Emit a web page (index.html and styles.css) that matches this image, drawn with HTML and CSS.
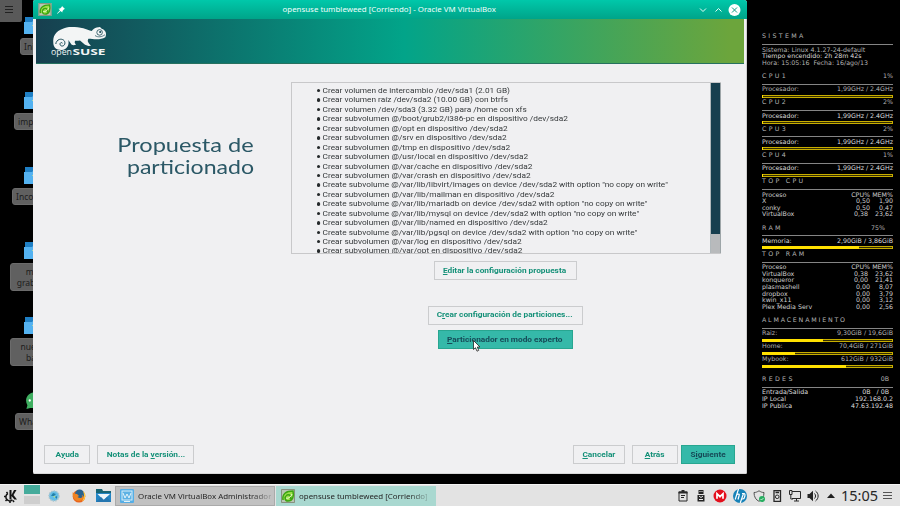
FILE: index.html
```html
<!DOCTYPE html>
<html lang="es">
<head>
<meta charset="utf-8">
<title>opensuse tumbleweed</title>
<link rel="stylesheet" href="styles.css">
</head>
<body>
<svg width="0" height="0" class="defs">
  <defs>
    <symbol id="folder" viewBox="0 0 20 17"><path d="M1 0h19v8H1z" fill="#1f7fc4"/><path d="M0 5h8l1-1h11v13H0z" fill="#54b2f0"/><path d="M8 8h1v1H8z" fill="#a5d6b0"/></symbol>
    <symbol id="suse" viewBox="0 0 14 14"><path d="M0 0h14v14H0z" fill="#b9c6b4"/><path d="M.5.5h13v13H.5z" fill="none" stroke="#87917f"/><path d="M2 11C1 5 5 2 12 2c1 5 0 10-5 10-3 0-4-4-1-6 3-1 5 2 3 4" fill="#9be04a" stroke="#3ca512" stroke-width="1.5"/><path d="M5 9c2 1 5-1 6-4" fill="none" stroke="#effbd8"/></symbol>
  </defs>
</svg>
<main class="desktop">
  <div class="corner"><i></i><i></i><i></i></div>
  <div class="shortcut s1"><svg><use href="#folder"/></svg><span>Inicio</span></div>
  <div class="shortcut s2"><svg><use href="#folder"/></svg><span>impre</span></div>
  <div class="shortcut s3"><svg><use href="#folder"/></svg><span>Incom</span></div>
  <div class="shortcut s4"><svg><use href="#folder"/></svg><span>mis<br>graba</span></div>
  <div class="shortcut s5"><svg><use href="#folder"/></svg><span>nuev<br>bac</span></div>
  <div class="shortcut s6"><svg viewBox="0 0 20 18"><path d="M2 18l1-4C-1 7 4 0 12 0h8v17H6z" fill="#3fae60"/><circle cx="5.5" cy="9" r="1.2" fill="#fff"/></svg><span>What</span></div>

  <section class="window">
    <header class="titlebar">
      <svg class="appicon"><use href="#suse"/></svg>
      <svg class="pin" viewBox="0 0 8 8"><path d="M5 0l3 3-1 .3-1.500 1.600-.2 1.600L3.600 5 .5 7.800 0 7.500 3 4.300 1.500 2.800l1.600-.3L4.700 1z" fill="#fff"/></svg>
      <h1>opensuse tumbleweed [Corriendo] - Oracle VM VirtualBox</h1>
      <svg class="winbtns" viewBox="0 0 42 12"><path d="M1 4.500l3 3 3-3M16.500 7.500l3-3 3 3" fill="none" stroke="#e5fff8"/><circle cx="35.500" cy="6" r="6" fill="#fff"/><path d="M33 3.500l5 5m0-5l-5 5" stroke="#109b82"/></svg>
    </header>
    <div class="screen">
      <div class="banner">
        <svg viewBox="0 0 58 32">
          <path d="M2.300 17.300C2 13 2.500 11 4 8.500 6 5.500 8.500 4 10.700 3.300 14 1.500 17 1 20.700 1c4 0 8 .2 11.600 1.300 3 1 6 2.200 8.400 2.700 1.500-1.700 3-3 5-3.500l3.300-.4 1.700 1.600c2 .5 3.600 2 4 3.600.5 1.700.4 3.500-.4 5-2.500 1.500-5.600 2-8.600 2-3 0-6-.4-8.400-.6l-.6 2.300c.8 2 2 3.700 3.300 4.700l-2.500.3-3.500-1.300-5-4.300c-2 .5-3.500.6-5 .3l-.3 2 1.300 2-2.500.5-1.800-.5-3.400-4.700c1.200 5-1.300 9.800-6.600 10C5.500 24.200 2.600 21.500 2.300 17.300z" fill="#f3f5f5"/>
          <path d="M11.500 17.200c-.9-1.300-3-.3-2.400 1.500.8 2 4 1.800 4.700-.8.700-3.500-2.500-5.300-5.300-4.500-2.200.7-3.500 2.500-3.700 4.600" fill="none" stroke="#194a56" stroke-width="1"/>
          <circle cx="48.600" cy="6.400" r="2.800" fill="#f3f5f5" stroke="#194a56" stroke-width=".8"/><circle cx="49.200" cy="6" r="1.100" fill="#194a56"/><path d="M44 9.500c3 2.200 7 1.500 10-.8" fill="none" stroke="#194a56" stroke-width=".7"/>
          <text x="0" y="28.600" class="logo-open" textLength="21" lengthAdjust="spacingAndGlyphs">open</text>
          <text x="21.500" y="28.600" class="logo-suse" textLength="33" lengthAdjust="spacingAndGlyphs">SUSE</text>
        </svg>
      </div>
      <div class="content">
        <h2><span>Propuesta de</span><br><span class="h2b">particionado</span></h2>
        <div class="proposal">
          <div class="viewport">
            <ul>
              <li>Crear volumen de intercambio /dev/sda1 (2.01 GB)</li>
              <li>Crear volumen raíz /dev/sda2 (10.00 GB) con btrfs</li>
              <li>Crear volumen /dev/sda3 (3.32 GB) para /home con xfs</li>
              <li>Crear subvolumen @/boot/grub2/i386-pc en dispositivo /dev/sda2</li>
              <li>Crear subvolumen @/opt en dispositivo /dev/sda2</li>
              <li>Crear subvolumen @/srv en dispositivo /dev/sda2</li>
              <li>Crear subvolumen @/tmp en dispositivo /dev/sda2</li>
              <li>Crear subvolumen @/usr/local en dispositivo /dev/sda2</li>
              <li>Crear subvolumen @/var/cache en dispositivo /dev/sda2</li>
              <li>Crear subvolumen @/var/crash en dispositivo /dev/sda2</li>
              <li>Create subvolume @/var/lib/libvirt/images on device /dev/sda2 with option "no copy on write"</li>
              <li>Crear subvolumen @/var/lib/mailman en dispositivo /dev/sda2</li>
              <li>Create subvolume @/var/lib/mariadb on device /dev/sda2 with option "no copy on write"</li>
              <li>Create subvolume @/var/lib/mysql on device /dev/sda2 with option "no copy on write"</li>
              <li>Crear subvolumen @/var/lib/named en dispositivo /dev/sda2</li>
              <li>Create subvolume @/var/lib/pgsql on device /dev/sda2 with option "no copy on write"</li>
              <li>Crear subvolumen @/var/log en dispositivo /dev/sda2</li>
              <li>Crear subvolumen @/var/opt en dispositivo /dev/sda2</li>
            </ul>
            <div class="scrollbar"><div class="thumb"></div></div>
          </div>
          <div class="actions">
            <button class="edit"><span><u>E</u>ditar la configuración propuesta</span></button>
            <button class="create"><span>C<u>r</u>ear configuración de particiones...</span></button>
            <button class="expert primary"><span><u>P</u>articionador en modo experto</span></button>
          </div>
        </div>
      </div>
      <footer>
        <button class="b-help"><span>A<u>y</u>uda</span></button>
        <button class="b-notes"><span>Notas de la <u>v</u>ersión...</span></button>
        <button class="b-cancel"><span><u>C</u>ancelar</span></button>
        <button class="b-back"><span><u>A</u>trás</span></button>
        <button class="b-next primary"><span>S<u>i</u>guiente</span></button>
      </footer>
    </div>
  </section>
  <svg class="cursor" viewBox="0 0 8 12"><path d="M.5.5v9l2-1.800 1.500 3.500 1.700-.8L4.300 7H7z" fill="#fff" stroke="#222" stroke-width=".8"/></svg>

  <aside class="conky">
    <div class="head"><b>SISTEMA</b></div><hr>
    <div><span>Sistema: Linux 4.1.27-24-default</span></div>
    <div><span class="bright">Tiempo encendido: 2h 28m 42s</span></div>
    <div><span>Hora: 15:05:16&nbsp; Fecha: 16/ago/13</span></div>
    <div></div>
    <div class="head"><b>CPU1</b><span>1%</span></div><hr>
    <div><span>Procesador:</span><span>1,99GHz / 2.4GHz</span></div><div class="bar"><i style="width:1%"></i></div>
    <div class="head"><b>CPU2</b><span>2%</span></div><hr>
    <div class="bright"><span>Procesador:</span><span>1,99GHz / 2.4GHz</span></div><div class="bar"><i style="width:1%"></i></div>
    <div class="head"><b>CPU3</b><span>2%</span></div><hr>
    <div class="bright"><span>Procesador:</span><span>1,99GHz / 2.4GHz</span></div><div class="bar"><i style="width:1%"></i></div>
    <div class="head"><b>CPU4</b><span>1%</span></div><hr>
    <div class="bright"><span>Procesador:</span><span>1,99GHz / 2.4GHz</span></div><div class="bar"><i style="width:1%"></i></div>
    <div class="head"><b>TOP CPU</b></div><hr>
    <div class="proc"><span>Proceso</span><span>CPU%</span><span>MEM%</span></div>
    <div class="proc"><span>X</span><span>0,50</span><span>1,90</span></div>
    <div class="proc"><span>conky</span><span>0,50</span><span>0,47</span></div>
    <div class="proc"><span>VirtualBox</span><span>0,38&nbsp;</span><span>23,62</span></div>
    <div></div>
    <div class="head"><b>RAM</b><span class="in8">75%</span></div><hr>
    <div class="bright"><span>Memoria:</span><span>2,90GiB / 3,86GiB</span></div><div class="bar"><i style="width:75%"></i></div>
    <div class="head"><b>TOP RAM</b></div><hr>
    <div class="proc"><span>Proceso</span><span>CPU%</span><span>MEM%</span></div>
    <div class="proc"><span>VirtualBox</span><span>0,38&nbsp;</span><span>23,62</span></div>
    <div class="proc"><span>konqueror</span><span>0,00&nbsp;</span><span>21,41</span></div>
    <div class="proc"><span>plasmashell</span><span>0,00</span><span>8,07</span></div>
    <div class="proc"><span>dropbox</span><span>0,00</span><span>3,79</span></div>
    <div class="proc"><span>kwin_x11</span><span>0,00</span><span>3,12</span></div>
    <div class="proc"><span>Plex Media Serv</span><span>0,00</span><span>2,56</span></div>
    <div></div>
    <div class="head tight"><b>ALMACENAMIENTO</b></div><hr>
    <div><span>Raiz:</span><span>9,30GiB / 19,6GiB</span></div><div class="bar"><i style="width:47%"></i></div>
    <div><span>Home:</span><span>70,4GiB / 271GiB</span></div><div class="bar"><i style="width:25.500%"></i></div>
    <div><span>Mybook:</span><span>612GiB / 932GiB</span></div><div class="bar"><i style="width:65%"></i></div>
    <div></div>
    <div class="head"><b>REDES</b><span class="in4">0B</span></div><hr>
    <div class="bright"><span>Entrada/Salida</span><span class="in4">0B&nbsp;&nbsp; / 0B</span></div>
    <div class="bright"><span>IP Local</span><span>192.168.0.2</span></div>
    <div class="bright"><span>IP Publica</span><span>47.63.192.48</span></div>
  </aside>

  <nav class="panel">
    <svg class="kde" viewBox="0 0 14 14"><path d="M5.500 1h2v5L10 1h2.500L9.500 6l3.500 4.500h-2.600L7.500 7v3.500h-2z" fill="#151515"/><path d="M4 4.500c-2.500 1-3 5-.5 6.500 1.500 1.400 4 1 5-.2" fill="none" stroke="#151515" stroke-width="1.500"/><path d="M2.500 3l1.200 1.500M0 7.500h2M1.500 12l1.500-1.500M6 12v2M10 13l-1-1.500" stroke="#151515" stroke-width="1.500"/></svg>
    <div class="pager"><i></i><i></i></div>
    <svg class="globe" viewBox="0 0 12 12"><circle cx="6" cy="6" r="5" fill="#64bde6" stroke="#abc5cd" stroke-width="1.500" stroke-dasharray="1.500 1"/><path d="M3 6l2-3 3 1-2 2zm4 1l2-1v3z" fill="#2380a8"/><path d="M5 6h2v2z" fill="#b8e27c"/></svg>
    <svg class="fox" viewBox="0 0 14 14"><circle cx="7" cy="7.300" r="6.300" fill="#e9641c"/><circle cx="7.600" cy="5.300" r="4.700" fill="#28638f"/><path d="M.8 3C2 5 3 4.500 5 5L7 7 5.500 8c2 2 5 1 5-1L9.500 6C13 6 12 12 7 12 2 12 0 7 .8 3z" fill="#f08422"/><path d="M11 2c3 2 3 7 .5 9.500L10 12c3-4 2-7 1-10z" fill="#ffc83d"/></svg>
    <svg class="mail" viewBox="0 0 15 13"><path d="M0 0h6l1 2h8v11H0z" fill="#176575"/><path d="M0 4h15v9H0z" fill="#2385c4"/><path d="M1.500 5H14L7.500 11z" fill="#edf6fa"/><path d="M1 12l4-4 3 3 3-3 4 5H0z" fill="#2576b0"/></svg>
    <div class="task t1"><svg viewBox="0 0 14 14"><rect width="14" height="14" rx="1" fill="#55aee6"/><rect x="2" y="2" width="10" height="9" fill="#5eb2e4" stroke="#d8edf8"/><path d="M3 4l2 5 2-4 2 4 2-5M4 12.500h6" fill="none" stroke="#e4f3fa"/></svg><span>Oracle VM VirtualBox Administrador</span></div>
    <div class="task t2"><svg><use href="#suse"/></svg><span>opensuse tumbleweed [Corriendo]</span></div>
    <div class="tray">
      <svg viewBox="0 0 12 12"><path d="M2 2h8v9H2zM4 5.500h4M4 7.500h3" fill="none" stroke="#282828"/><path d="M1.500 1.500h9v2h-9zM4.500 0h3v2h-3z" fill="#282828"/></svg>
      <svg viewBox="0 0 12 12"><path d="M3.500 0h5v4h-5zM2.500 5h7v6.500h-7z" fill="#242424"/><path d="M4.500 1.500h1m1 0h1M4 9.500h4M4 6l2 1.500L8 6" stroke="#eee" fill="none"/></svg>
      <svg class="big" viewBox="0 0 14 14"><circle cx="7" cy="7" r="6.500" fill="#e30f1c"/><path d="M4 9.800V4.700l3 3 3-3v5.100" fill="none" stroke="#fff" stroke-width="1.700"/></svg>
      <svg class="big" viewBox="0 0 14 14"><circle cx="7" cy="7" r="7" fill="#1682b8"/><path d="M5.500 0L2.200 10.500M3.800 5.500c3-1 2.600 0 2.200 1.500l-1 3.500M10.500 4.500L7.200 14M9 4.500h2c2 0 .5 5.500-1 5.500H8.500" fill="none" stroke="#fff" stroke-width="1.200"/></svg>
      <svg viewBox="0 0 12 12"><path d="M1 2.500C3 2.500 4 2 6 .8c2 1.200 3 1.700 5 1.700C11 7 9 10 6 11.300 3 10 1 7 1 2.500z" fill="none" stroke="#555"/><circle cx="9" cy="9" r="3" fill="#27ae60"/><path d="M7.500 9l1 1L10.500 8" stroke="#fff" fill="none" stroke-width=".7"/></svg>
      <svg viewBox="0 0 12 12"><path d="M3 .5h6.500v11H3zM4.500 2.500h3.500" fill="none" stroke="#282828" stroke-width="1.300"/><circle cx="6.200" cy="6.800" r="1.800" fill="none" stroke="#282828"/></svg>
      <svg viewBox="0 0 12 12"><path d="M3 1.500h8.500v7H3M5 11h5M7.500 8.500V11M.5.500H3v4H.5zM1.800 4.500V9H4" fill="none" stroke="#282828"/></svg>
      <svg viewBox="0 0 12 12"><path d="M.5 4h2L6 .8v10.400L2.500 8h-2z" fill="#242424"/><path d="M7.500 3.500c1.400 1.500 1.400 3.500 0 5M8.500 1c3.500 2.500 3.500 7.500 0 10" fill="none" stroke="#242424"/></svg>
      <svg viewBox="0 0 12 12"><path d="M2 8l4-4.500L10 8z" fill="#202020"/></svg>
    </div>
    <time>15:05</time>
    <div class="lines"><i></i><i></i><i></i></div>
  </nav>
</main>
</body>
</html>
```

FILE: styles.css
```css
* { box-sizing: border-box; }
body { margin: 0; background: #000; }
h1, h2, ul { margin: 0; padding: 0; font-weight: normal; }
.defs { position: absolute; }
.desktop { position: relative; width: 900px; height: 506px; overflow: hidden; background: #000; }

.corner { position: absolute; left: 0; top: 0; width: 22px; height: 22px; background: #595959; border-radius: 0 0 2px 0; padding: 6px 9px 0 5px; }
.corner i { display: block; height: 1px; background: #222; margin-bottom: 2px; }
.shortcut { position: absolute; display: flex; flex-direction: column; align-items: flex-end; width: 60px; left: 0; font: 8.500px/11px "Noto Sans", sans-serif; color: #1c1c1c; }
.shortcut svg { width: 20px; height: 17px; margin-right: 16px; flex: none; }
.shortcut span { width: 46px; margin-top: 4px; padding: 2px 3px; background: #606060; border: 1px solid #6b6b6b; border-radius: 3px; min-height: 17px; white-space: nowrap; }
.s1 { top: 17px; } .s2 { top: 92px; } .s3 { top: 167px; } .s4 { top: 242px; } .s5 { top: 317px; } .s6 { top: 392px; }
.s1 span { width: 40px; }
.s3 span { width: 48px; }
.s4 span, .s5 span { width: 50px; height: 28px; padding-right: 19px; text-align: right; }
.s6 span { width: 45px; padding-left: 3px; }

.window { position: absolute; left: 33px; top: 0; width: 713.500px; height: 474px; background: #f0f0f2; border-radius: 2px 3px 2px 2px; overflow: hidden; }
.titlebar { height: 19px; display: flex; align-items: center; background: linear-gradient(#00c8aa, #00a489); padding: 0 6px 0 5px; color: #f2fffc; }
.appicon { width: 14px; height: 13px; flex: none; }
.pin { width: 8px; height: 8px; margin-left: 5px; }
.titlebar h1 { flex: 1; margin-left: 217.500px; font: 7.900px/19px "Noto Sans", sans-serif; white-space: nowrap; }
.winbtns { width: 42px; height: 12px; flex: none; }
.screen { height: 455px; padding: 0 2px 0 3px; display: flex; flex-direction: column; border-right: 1px solid #cfcfcf; border-bottom: 1px solid #d8d8d8; }
.banner { height: 45px; background: linear-gradient(90deg, #173f4f 0, #02a489 52%, #6ca53c 98%); border-bottom: 1px solid #26715f; }
.banner svg { display: block; width: 58px; height: 32px; margin: 7px 0 0 15px; }
.logo-open, .logo-suse { font-family: "Open Sans", sans-serif; font-size: 9.200px; fill: #f1f5f5; }
.logo-suse { font-weight: bold; }
.content { flex: 1; display: flex; padding-top: 18px; }
h2 { width: 218px; margin-right: 37px; padding-top: 51px; font: 20px/22.300px Lato, sans-serif; color: #2b5866; text-align: right; }
h2 span { display: inline-block; transform: scaleX(1.180); transform-origin: right; }
h2 .h2b { transform: scaleX(1.155); }
.proposal { width: 430px; }
.viewport { height: 172px; border: 1px solid #c8c8ca; border-right: 0; display: flex; overflow: hidden; }
ul { flex: 1; list-style: none; padding: 3px 0 0 25px; font: 8px/9.430px Roboto, sans-serif; color: #34383a; }
li { display: flex; align-items: center; white-space: nowrap; width: 350px; transform: scaleX(1.036); transform-origin: left; }
li::before { content: ""; flex: none; width: 3.400px; height: 3.400px; border-radius: 50%; background: #25292b; margin-right: 2px; }
.scrollbar { width: 11px; background: #b8babc; border-left: 1px solid #b0b8bb; border-right: 1px solid #9da5a8; }
.thumb { height: 150.500px; background: #173f4f; }
.actions { display: flex; flex-direction: column; align-items: center; padding: 7px 2px 0 0; }
button { flex: none; height: 19px; padding: 0; border: 1px solid #cbccce; background: #f0f0f2; color: #149078; font: bold 8px/16px Roboto, sans-serif; white-space: nowrap; }
button span { display: inline-block; transform: scaleX(1.035); }
u { text-underline-offset: 1px; text-decoration-thickness: .7px; }
.primary { background: #35b9a9; border-color: #28a690; color: #164a57; }
.edit { width: 143px; }
.create { width: 155px; margin-top: 25.500px; }
.expert { width: 135px; margin-top: 5.500px; }
footer { display: flex; height: 28px; padding-left: 8px; }
footer button { margin-top: 0; }
.b-help { width: 46px; }
.b-notes { width: 97px; margin-left: 7px; }
.b-cancel { width: 52px; margin-left: 379px; }
.b-back { width: 46px; margin-left: 7px; }
.b-next { width: 54px; margin-left: 3px; }
.cursor { position: absolute; left: 473px; top: 340px; width: 8px; height: 12px; }

.conky { position: absolute; left: 762px; top: 33.400px; width: 131px; font: 6.300px/6.600px "DejaVu Sans", sans-serif; color: #b4b4b4; }
.conky > div { display: flex; justify-content: space-between; height: 6.600px; white-space: nowrap; }
.conky .bright { color: #dedede; }
.conky hr { height: 6.600px; margin: 0; border: 0; background: linear-gradient(#858585, #858585) 0 4px / 100% 1px no-repeat; }
.conky b { font-weight: normal; letter-spacing: 2.300px; }
.conky .tight b { letter-spacing: 1.800px; }
.conky > .bar { height: 3px; margin: 2px 0 1.600px; border: 1px solid #c7ad00; background: #332c00; }
.bar i { background: #ffe000; margin: -1px 0 -1px -1px; }
.conky > .proc { display: grid; grid-template-columns: 1fr 40px 23px; color: #cfcfcf; }
.proc span + span { text-align: right; }
.in8 { margin-right: 8px; }
.in4 { margin-right: 4px; }

.panel { position: absolute; left: 0; right: 0; bottom: 0; height: 22px; display: flex; align-items: center; background: #e3e3e3; border-top: 1px solid #f4f4f4; color: #262626; font-family: "Noto Sans", sans-serif; }
.panel svg, .panel > * { flex: none; }
.kde { width: 14px; height: 14px; margin-left: 4px; }
.pager { width: 16px; margin-left: 6px; align-self: stretch; }
.pager i { display: block; height: 9px; background: #45ab9b; margin-bottom: 2px; }
.pager i + i { background: #cecece; height: 8px; }
.globe { width: 12px; height: 12px; margin-left: 8px; }
.fox { width: 14px; height: 14px; margin-left: 12px; }
.mail { width: 15px; height: 13px; margin-left: 10px; }
.task { height: 20px; display: flex; align-items: center; gap: 4px; padding-left: 5px; font-size: 8.150px; white-space: nowrap; }
.task svg { width: 14px; height: 14px; }
.task span { -webkit-mask-image: linear-gradient(90deg, #000 85%, #0003); mask-image: linear-gradient(90deg, #000 85%, #0003); }
.t1 { width: 160px; margin-left: 4px; background: #c1c1c1; border: 1px solid #aaa; font-size: 7.900px; padding-left: 4px; }
.t2 { width: 160px; margin-left: 1px; background: #a9d8d0; font-size: 7.900px; }
.tray { display: flex; align-items: center; margin-left: 241px; width: 160px; justify-content: space-between; }
.tray svg { width: 12px; height: 12px; }
.tray .big { width: 14px; height: 14px; }
time { margin-left: 4px; margin-top: -2px; font-size: 14.500px; line-height: 20px; width: 38px; }
.lines { width: 9px; margin-left: 4px; }
.lines i { display: block; height: 1px; background: #555; margin: 2px 0; }
```
